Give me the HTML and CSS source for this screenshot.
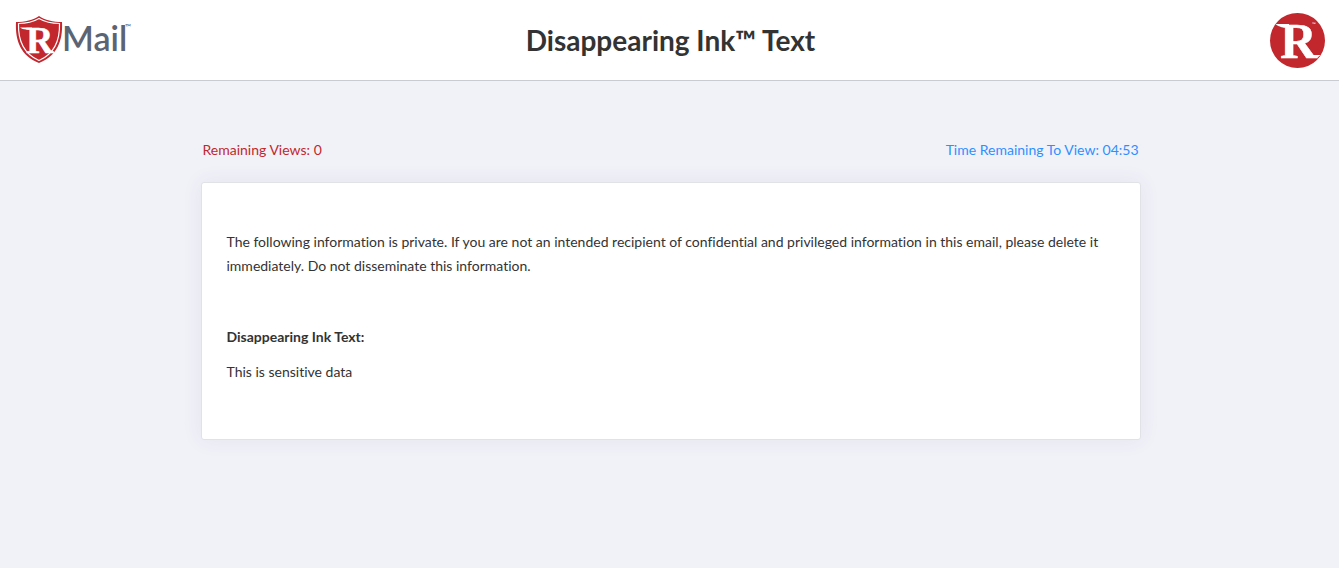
FILE: index.html
```html
<!DOCTYPE html>
<html lang="en">
<head>
<meta charset="UTF-8">
<meta name="viewport" content="width=device-width, initial-scale=1.0">
<title>Disappearing Ink Text</title>
<link rel="stylesheet" href="styles.css">
</head>
<body>

<header class="header">
    <svg class="logo" width="120" height="50" viewBox="0 0 120 50" role="img" aria-label="RMail">
        <path fill="#c1272d" d="M23 1 C17 5 9 7 0 7 C-1 26 5 41 23 48 C41 41 47 26 46 7 C37 7 29 5 23 1 Z"/>
        <path fill="#c1272d" stroke="#fff" stroke-width="1.2" d="M23 3.5 C17 7 11 8.5 2.5 8.5 C2 25 8 39 23 45.5 C38 39 44 25 43.5 8.5 C35 8.5 29 7 23 3.5 Z"/>
        <path fill="#fff" d="M4 12.5 H16 V14.5 H10 Q6 14.5 4 12.5 Z M30 35.5 H37 Q35 38 33 38 H30 Z"/>
        <text class="logo-letter" x="10" y="38" font-size="38">R</text>
        <text class="logo-name" x="46" y="36" font-size="34">Mail</text>
        <text class="logo-mark" x="109" y="15" font-size="8">™</text>
    </svg>
    <h1 class="title">Disappearing Ink™ Text</h1>
    <svg class="badge" width="56" height="56" viewBox="0 0 56 56" role="img" aria-label="R">
        <circle cx="28.5" cy="28.5" r="27.5" fill="#c1272d"/>
        <path fill="#fff" d="M6.5 12 H20 V15 H15 Q9 15 6.5 12 Z M40 43 H51.5 Q49 46 46 46 H40 Z"/>
        <text class="logo-letter" x="11" y="46" font-size="51">R</text>
        <text class="badge-mark" x="43" y="14" font-size="5">™</text>
    </svg>
</header>

<main class="container">
    <div class="status">
        <span class="views">Remaining Views: 0</span>
        <span class="timer">Time Remaining To View: <span id="time">04:53</span></span>
    </div>
    <div class="card">
        <p class="notice">The following information is private. If you are not an intended recipient of confidential and privileged information in this email, please delete it immediately. Do not disseminate this information.</p>
        <h2 class="card-heading">Disappearing Ink Text:</h2>
        <p class="message">This is sensitive data</p>
    </div>
</main>

</body>
</html>
```
FILE: styles.css
```css
body {
    margin: 0;
    min-height: 100vh;
    background-color: #f1f2f8;
    color: #333;
    font-family: Lato, sans-serif;
    font-size: 14px;
    line-height: 24px;
    font-variant-ligatures: none;
}
.header {
    display: grid;
    grid-template-columns: 1fr auto 1fr;
    align-items: center;
    height: 80px;
    padding: 0 14px 0 16px;
    background-color: #fff;
    border-bottom: 1px solid #c9cbd3;
}
.logo {
    overflow: visible;
}
.badge {
    justify-self: end;
}
.logo-letter {
    fill: #fff;
    stroke: #fff;
    stroke-width: 0.5px;
    font-family: "Liberation Serif", serif;
    font-weight: bold;
}
.logo-name {
    fill: #5b6473;
    font-family: Lato, sans-serif;
    font-weight: 600;
}
.logo-mark {
    fill: #5b6473;
}
.badge-mark {
    fill: #fff;
}
.title {
    margin: 0;
    font-size: 28px;
    font-weight: bold;
    line-height: 36px;
}
.container {
    width: 90%;
    max-width: 940px;
    margin: 0 auto;
    padding: 57px 0 40px 2px;
}
.status {
    display: flex;
    justify-content: space-between;
    padding: 0 2px;
}
.views {
    color: #c1272d;
}
.timer {
    color: #2f8fff;
}
.card {
    margin-top: 20px;
    padding: 47px 25px 55px;
    background-color: #fff;
    border: 1px solid #e1e2e8;
    border-radius: 3px;
    box-shadow: 0 0 20px rgba(60, 60, 110, 0.08);
}
.notice {
    margin: 0;
}
.card-heading {
    margin: 47px 0 0;
    font-size: 14px;
    font-weight: bold;
    line-height: 24px;
}
.message {
    margin: 11px 0 0;
}
```
